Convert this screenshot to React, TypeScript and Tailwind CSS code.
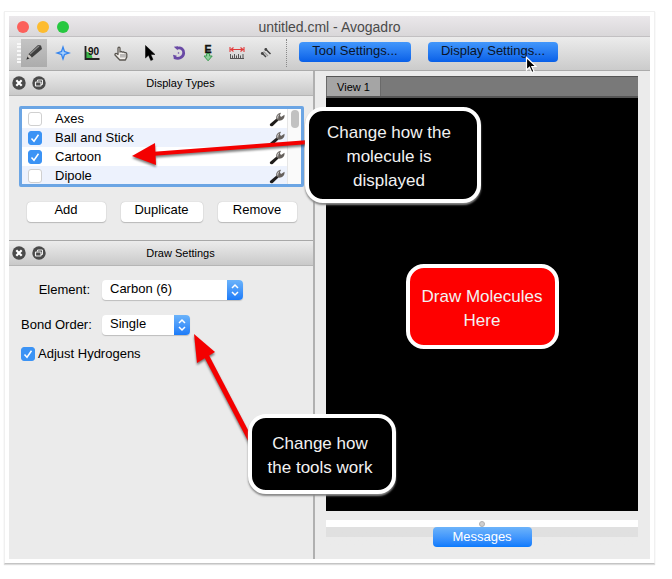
import type { ReactNode } from "react";

const displayTypes = [
  { name: "Axes", checked: false },
  { name: "Ball and Stick", checked: true },
  { name: "Cartoon", checked: true },
  { name: "Dipole", checked: false },
];

function PencilIcon() {
  return (
    <svg width="20" height="20" viewBox="0 0 20 20">
      <path d="M2.500 16.500 4.500 11 14 2 17 2.500 18 6 8 14.500Z" fill="#3f3f3f" />
      <path d="M6 11 15 3" stroke="#8b8b8b" strokeWidth="1.400" />
      <path d="M2.500 16.500 4.500 11 8 14.500Z" fill="#c9c5c0" />
      <path d="M2.500 16.500 3.500 13.800 5.300 15.400Z" fill="#222" />
    </svg>
  );
}

function NavigateIcon() {
  return (
    <svg width="18" height="18" viewBox="0 0 18 18">
      <path d="M9 1 11 7 17 9 11 11 9 17 7 11 1 9 7 7Z" fill="#3484ee" />
      <path d="M9 5 9.900 8.100 13 9 9.900 9.900 9 13 8.100 9.900 5 9 8.100 8.100Z" fill="#a8d2ff" />
    </svg>
  );
}

function BondCentricIcon() {
  return (
    <svg width="16" height="16" viewBox="0 0 16 16">
      <path d="M2 6.500A7 7 0 0 1 8.500 13.500H2Z" fill="#39b54a" />
      <path d="M1.500 1V14H15.500" fill="none" stroke="#222" strokeWidth="1.800" />
      <text x="4" y="9.500" fontFamily="Liberation Sans, sans-serif" fontWeight="700" fontSize="10" fill="#111">90</text>
    </svg>
  );
}

function HandIcon() {
  return (
    <svg width="16" height="16" viewBox="0 0 16 16">
      <path
        d="M5 9.500V3.200C5 1.800 7 1.800 7 3.200V7L8.500 6.500 9.300 7.200 10.700 6.900 11.500 7.600 13 7.700 13.800 9V12L12.400 15H6.800L2 10C1.500 8.800 3 8 4 8.800Z"
        fill="#f2efeb"
        stroke="#5a5650"
        strokeWidth="1.300"
        strokeLinejoin="round"
      />
      <path d="M8 9V12.500M10 9V12.500M12 9V12.500" stroke="#777" strokeWidth="0.900" />
    </svg>
  );
}

function CursorIcon({ outlined = false }: { outlined?: boolean }) {
  return (
    <svg width="12" height="18" viewBox="0 0 12 18">
      <path
        d="M1.500 1.500V14L4.500 11.200 6.800 16.500 9 15.500 6.800 10.500H11Z"
        fill="#000"
        stroke={outlined ? "#fff" : "#000"}
        strokeWidth={outlined ? "1.200" : "0.500"}
      />
    </svg>
  );
}

function RotateIcon() {
  return (
    <svg width="16" height="16" viewBox="0 0 16 16">
      <path d="M6 3.200C10 1.800 13 4.600 12.700 8.200 12.300 12.600 7.500 14.700 3.200 12.300" fill="none" stroke="#6949a5" strokeWidth="2.800" />
      <path d="M2.800 1.800 7 1.300 6.600 5.200Z" fill="#6949a5" />
      <path d="M2 9.800 3.200 14.500 5.800 10.800Z" fill="#6949a5" />
      <circle cx="7.500" cy="8" r="0.800" fill="#6949a5" />
    </svg>
  );
}

function OptimizeIcon() {
  return (
    <svg width="12" height="18" viewBox="0 0 12 18">
      <text x="2.500" y="8.500" fontFamily="Liberation Sans, sans-serif" fontWeight="700" fontSize="10.500" fill="#111" stroke="#111" strokeWidth="0.400">E</text>
      <path d="M4.600 9.500H7.600V12H10.200L6.100 16.800 2 12H4.600Z" fill="#8fd19c" stroke="#3c9c50" />
    </svg>
  );
}

function MeasureIcon() {
  return (
    <svg width="16" height="14" viewBox="0 0 16 14">
      <path d="M1 1V6M15 1V6M2 3.500H14M4.500 1.500 2 3.500 4.500 5.500M11.500 1.500 14 3.500 11.500 5.500" fill="none" stroke="#e23b3b" strokeWidth="1.100" />
      <path d="M1 12.500H15M1.500 8V12M3.500 9.500V12M5.500 8V12M7.500 9.500V12M9.500 8V12M11.500 9.500V12M14 8V12" stroke="#555" />
    </svg>
  );
}

function AlignIcon() {
  return (
    <svg width="12" height="12" viewBox="0 0 12 12">
      <path d="M2 6 6 10M5.500 2 10.500 7" stroke="#444" strokeWidth="1.500" />
      <path d="M3.500 4.500 8 9" stroke="#999" strokeWidth="1.200" />
      <circle cx="2.300" cy="6.500" r="1.400" fill="#444" />
      <circle cx="5.800" cy="2.500" r="1.400" fill="#444" />
    </svg>
  );
}

function WrenchIcon() {
  return (
    <svg width="16" height="16" viewBox="0 0 16 16">
      <path d="M1 13 7.500 7.500 9.700 9.300 3.700 15C1.800 15.900.2 14.500 1 13Z" fill="#1e1c1b" />
      <path d="M7.500 8.500C6.500 5 8.500 2.200 12 1.700L10.900 4.200 12 6 15.500 3.800C16 7.600 13 10 9.500 9.600Z" fill="#65605c" />
      <path d="M8.800 7.500C8.500 5.500 9.200 4 10.300 3.300" fill="none" stroke="#ddd" />
    </svg>
  );
}

function ToolButton({ label, children }: { label: string; children: ReactNode }) {
  return (
    <button aria-label={label} className="flex h-7 w-[29px] items-center justify-center">
      {children}
    </button>
  );
}

function SettingsButton({ className, children }: { className: string; children: ReactNode }) {
  return (
    <button
      className={`h-5 rounded bg-linear-to-b from-[#4297fb] to-[#075fe8] pb-[2px] text-[13px] leading-4 whitespace-nowrap text-[#0a1428] ${className}`}
    >
      {children}
    </button>
  );
}

function DockHeader({ title }: { title: string }) {
  return (
    <header className="flex h-[25px] items-center gap-[6px] border-b border-[#b5b5b5] bg-linear-to-b from-[#ececec] to-[#c9c9c9] pb-px pl-[3px]">
      <button aria-label={`Close ${title}`}>
        <svg width="14" height="14" viewBox="0 0 14 14">
          <circle cx="7" cy="7" r="6.700" fill="#4a4a4a" />
          <path d="M4.300 4.300 9.700 9.700M9.700 4.300 4.300 9.700" stroke="#fff" strokeWidth="2.200" />
        </svg>
      </button>
      <button aria-label={`Detach ${title}`}>
        <svg width="14" height="14" viewBox="0 0 14 14">
          <circle cx="7" cy="7" r="6.700" fill="#4a4a4a" />
          <path d="M5.500 5.500V4H10.500V8.500H9" fill="none" stroke="#eee" />
          <rect x="3.500" y="6" width="5.500" height="4" rx="0.500" fill="none" stroke="#eee" strokeWidth="1.200" />
        </svg>
      </button>
      <h2 className="flex-1 pr-1 text-center text-[11px] leading-4">{title}</h2>
    </header>
  );
}

function CheckBox({ id, checked }: { id: string; checked: boolean }) {
  return (
    <span className="relative flex size-[14px] shrink-0">
      <input
        id={id}
        type="checkbox"
        defaultChecked={checked}
        className="peer size-[14px] appearance-none rounded-[3px] border border-[#d0d0d0] bg-white checked:border-[#3b93f5] checked:bg-[#3b93f5]"
      />
      <svg viewBox="0 0 14 14" className="pointer-events-none absolute inset-0 hidden size-[14px] peer-checked:block">
        <path d="M3.500 7.500 6 10.200 10.500 3.800" fill="none" stroke="#fff" strokeWidth="1.500" />
      </svg>
    </span>
  );
}

function DropDown({ id, className, options }: { id: string; className: string; options: string[] }) {
  return (
    <span className={`relative flex ${className}`}>
      <select
        id={id}
        className="h-5 w-full appearance-none rounded bg-white pb-[3px] pl-2 text-[13px] leading-4 shadow-[0_1px_1px_#bdbdbd]"
      >
        {options.map((option) => (
          <option key={option}>{option}</option>
        ))}
      </select>
      <span className="pointer-events-none absolute inset-y-0 right-0 flex w-4 items-center justify-center rounded-r bg-linear-to-b from-[#6bb3fa] to-[#1b7bf8]">
        <svg width="10" height="14" viewBox="0 0 10 14">
          <path d="M2 5 5 2 8 5M2 9 5 12 8 9" fill="none" stroke="#fff" strokeWidth="1.500" />
        </svg>
      </span>
    </span>
  );
}

function PushButton({ className, children }: { className: string; children: ReactNode }) {
  return (
    <button className={`h-5 rounded bg-white pb-1 text-[13px] leading-4 shadow-[0_0_1px_#aaa,0_1px_1px_#bbb] ${className}`}>
      {children}
    </button>
  );
}

function Callout({ className, children }: { className: string; children: ReactNode }) {
  return (
    <div
      className={`flex items-center justify-center rounded-[18px] border-4 border-white pt-1 text-center text-[17px] leading-6 text-[#f2f2f2] ${className}`}
    >
      {children}
    </div>
  );
}

export default function App() {
  return (
    <main className="bg-white pt-[11px] pr-[17px] pb-[15px] pl-1 font-['Liberation_Sans',Arial,sans-serif] text-black">
      <div className="border border-[#f0f0f0] border-b-[#c4c4c4] bg-white p-1 shadow-[0_1px_1px_#ddd]">
        <div className="relative bg-[#ebebeb]">
          <header className="relative flex h-[21px] items-center justify-center border-b border-[#c2c0c2] bg-linear-to-b from-[#ebe8eb] to-[#d9d7d9] pt-px">
            <div className="absolute left-2 flex gap-2">
              <button aria-label="Close" className="size-3 rounded-full bg-[#fc605b]" />
              <button aria-label="Minimize" className="size-3 rounded-full bg-[#fdbc30]" />
              <button aria-label="Zoom" className="size-3 rounded-full bg-[#27c840]" />
            </div>
            <h1 className="text-sm leading-4 text-[#4a4a4a]">untitled.cml - Avogadro</h1>
          </header>

          <div className="flex h-[34px] items-start border-b border-[#ababab] bg-linear-to-b from-[#ececec] to-[#cbcbcb] pt-[2px]">
            <span className="mt-1 ml-2 h-5 w-1 border-x-2 border-dotted border-[#f8f8f8]" />
            <button
              aria-label="Draw tool"
              aria-pressed="true"
              className="mr-px flex h-7 w-[26px] items-center justify-center bg-linear-to-b from-[#c4c4c4] to-[#acacac]"
            >
              <PencilIcon />
            </button>
            <ToolButton label="Navigation tool"><NavigateIcon /></ToolButton>
            <ToolButton label="Bond centric tool"><BondCentricIcon /></ToolButton>
            <ToolButton label="Manipulation tool"><HandIcon /></ToolButton>
            <ToolButton label="Selection tool"><CursorIcon /></ToolButton>
            <ToolButton label="Auto rotate tool"><RotateIcon /></ToolButton>
            <ToolButton label="Auto optimization tool"><OptimizeIcon /></ToolButton>
            <ToolButton label="Measure tool"><MeasureIcon /></ToolButton>
            <ToolButton label="Align tool"><AlignIcon /></ToolButton>
            <span className="mr-3 ml-[6px] h-7 border-l border-dotted border-[#888]" />
            <div className="mt-[3px] flex gap-[17px]">
              <SettingsButton className="w-28">Tool Settings...</SettingsButton>
              <div className="relative flex">
                <SettingsButton className="w-[130px]">Display Settings...</SettingsButton>
                <span className="pointer-events-none absolute top-[14px] right-[21px]">
                  <CursorIcon outlined />
                </span>
              </div>
            </div>
          </div>

          <div className="flex">
            <aside className="w-[306px] shrink-0 border-r-2 border-[#b0b0b0]">
              <section>
                <DockHeader title="Display Types" />
                <div className="pt-[10px] pr-[9px] pb-[18px] pl-[10px]">
                  <div className="flex h-[81px] overflow-hidden rounded-[2px] border-3 border-[#6ba5e4] bg-white">
                    <ul className="flex-1">
                      {displayTypes.map((type, index) => (
                        <li key={type.name} className="flex h-[19px] items-center pr-[2px] pl-[6px] even:bg-[#edf2fd]">
                          <CheckBox id={`type-${index}`} checked={type.checked} />
                          <label htmlFor={`type-${index}`} className="ml-[13px] flex-1 text-[13px] leading-4">
                            {type.name}
                          </label>
                          <button aria-label={`${type.name} settings`}>
                            <WrenchIcon />
                          </button>
                        </li>
                      ))}
                    </ul>
                    <div className="w-[14px] border-l border-[#e6e6e6] bg-[#fafafa] pt-px pl-[3px]">
                      <div className="h-[18px] w-2 rounded-full bg-[#c1c1c1]" />
                    </div>
                  </div>
                  <div className="mt-[15px] flex justify-center gap-[15px]">
                    <PushButton className="w-[79px]">Add</PushButton>
                    <PushButton className="w-[82px]">Duplicate</PushButton>
                    <PushButton className="w-[79px]">Remove</PushButton>
                  </div>
                </div>
              </section>

              <section className="border-t border-[#a8a8a8]">
                <DockHeader title="Draw Settings" />
                <div className="flex flex-col gap-[15px] pt-[14px] pl-3 text-[13px] leading-4">
                  <div className="flex items-center gap-3">
                    <label htmlFor="element" className="w-[69px] text-right">Element:</label>
                    <DropDown id="element" className="w-[141px]" options={["Carbon (6)", "Nitrogen (7)", "Oxygen (8)"]} />
                  </div>
                  <div className="flex items-center gap-3">
                    <label htmlFor="bond-order" className="w-[69px] text-right whitespace-nowrap">Bond Order:</label>
                    <DropDown id="bond-order" className="w-[88px]" options={["Single", "Double", "Triple"]} />
                  </div>
                  <div className="-mt-1 flex items-center gap-[3px]">
                    <CheckBox id="hydrogens" checked />
                    <label htmlFor="hydrogens">Adjust Hydrogens</label>
                  </div>
                </div>
              </section>
            </aside>

            <section className="flex-1 pt-[5px] pr-3 pb-3 pl-[11px]">
              <div className="flex h-[22px] border-t border-b-2 border-t-[#555] border-b-[#555] bg-[#797979]">
                <button className="w-[55px] border-x border-[#6a6a6a] bg-[#a5a5a5] text-[11px] leading-4">View 1</button>
              </div>
              <div className="flex h-[413px] items-center justify-center bg-black pt-1">
                <Callout className="h-[85px] w-[153px] bg-[#fe0000]">
                  <p>
                    Draw Molecules
                    <br />
                    Here
                  </p>
                </Callout>
              </div>
              <div className="mt-[9px] flex h-[7px] items-center justify-center bg-white">
                <span className="size-[6px] rounded-full border border-[#b0b0b0] bg-[#d0d0d0]" />
              </div>
              <div className="flex h-5 justify-center bg-linear-to-b from-[#e0e0e0] from-50% to-[#ebebeb] to-50%">
                <button className="w-[99px] rounded bg-linear-to-b from-[#6cb3fa] to-[#087afd] text-[13px] leading-4 text-white">
                  Messages
                </button>
              </div>
            </section>
          </div>

          <svg className="pointer-events-none absolute top-[120px] left-[122px] drop-shadow-[0_2px_1px_#00000080]" width="180" height="36" viewBox="0 0 180 36">
            <path d="M20 18 178 6" stroke="#f40000" strokeWidth="4" />
            <path d="M1 20 24 7 25 29Z" fill="#f40000" />
          </svg>
          <svg className="pointer-events-none absolute top-[317px] left-[184px] drop-shadow-[0_2px_1px_#00000080]" width="64" height="112" viewBox="0 0 64 112">
            <path d="M13 22 60 112" stroke="#f40000" strokeWidth="5" />
            <path d="M1 1 22 19 4 30Z" fill="#f40000" />
          </svg>
          <Callout className="absolute top-[91px] left-[296px] h-[96px] w-[176px] bg-black pr-2 shadow-[0_2px_2px_#888]">
            <p>
              Change how the
              <br />
              molecule is
              <br />
              displayed
            </p>
          </Callout>
          <Callout className="absolute top-[398px] left-[239px] h-20 w-[148px] bg-black pr-1 shadow-[0_2px_2px_#888]">
            <p>
              Change how
              <br />
              the tools work
            </p>
          </Callout>
        </div>
      </div>
    </main>
  );
}
